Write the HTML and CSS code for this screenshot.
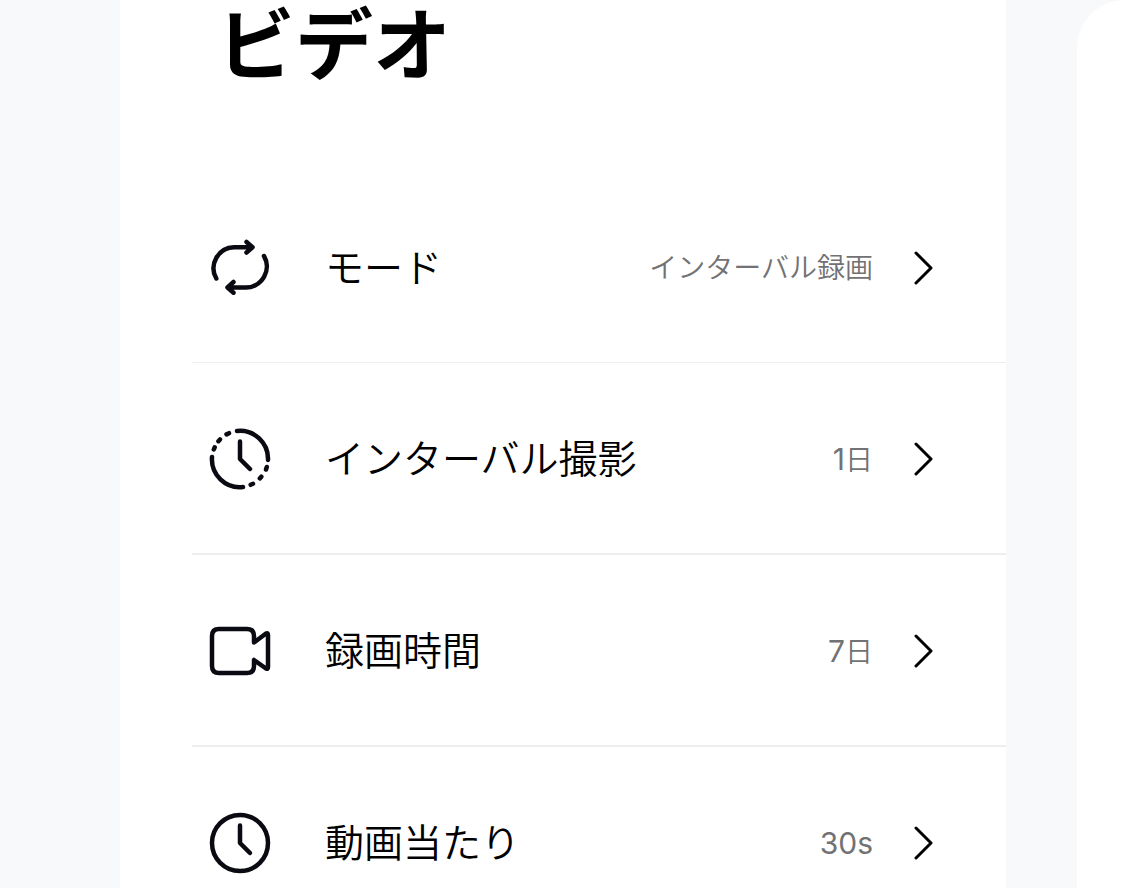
FILE: index.html
```html
<!DOCTYPE html>
<html lang="ja">
<head>
<meta charset="utf-8">
<meta name="viewport" content="width=device-width, initial-scale=1">
<title>ビデオ</title>
<link rel="stylesheet" href="styles.css">
</head>
<body>
<div class="layout">
  <main class="panel">
    <h1 class="title">ビデオ</h1>
    <ul class="settings">
      <li class="item">
        <button class="row" type="button">
          <svg class="icon" viewBox="0 0 64 64" aria-hidden="true"><path d="M8.300 42.500A21 21 0 0 1 26 11.200H44M38.500 6L44.500 11.200L38.500 16.500M56 20A21 21 0 0 1 38 51.500H20M25.500 46L19.500 51.500L25.500 56.700"/></svg>
          <span class="label">モード</span>
          <span class="value">インターバル録画</span>
          <svg class="chevron" viewBox="0 0 20 34" aria-hidden="true"><path d="M2 2L17 17L2 32"/></svg>
        </button>
      </li>
      <li class="item">
        <button class="row" type="button">
          <svg class="icon" viewBox="0 0 64 64" aria-hidden="true"><path d="M29 4A28 28 0 0 1 60 33M35 60A28 28 0 0 1 4 30M32 14.500V32L42 42M5.800 22.500L6.700 20.300M10.400 14.200L12 12.400M18.500 7.400L21 6.200M58.800 40L58 42.500M53.300 49.700L51.800 51.400M45 56.800L42.700 57.800"/></svg>
          <span class="label">インターバル撮影</span>
          <span class="value"><span class="number">1</span>日</span>
          <svg class="chevron" viewBox="0 0 20 34" aria-hidden="true"><path d="M2 2L17 17L2 32"/></svg>
        </button>
      </li>
      <li class="item">
        <button class="row" type="button">
          <svg class="icon" viewBox="0 0 64 64" aria-hidden="true"><path d="M11 10H39Q46 10 46 17V23.500L58 14.500Q60 13.500 60 16V48Q60 50.500 58 49.500L46 41V47Q46 54 39 54H11Q4 54 4 47V17Q4 10 11 10Z"/></svg>
          <span class="label">録画時間</span>
          <span class="value"><span class="number">7</span>日</span>
          <svg class="chevron" viewBox="0 0 20 34" aria-hidden="true"><path d="M2 2L17 17L2 32"/></svg>
        </button>
      </li>
      <li class="item">
        <button class="row" type="button">
          <svg class="icon" viewBox="0 0 64 64" aria-hidden="true"><circle cx="32" cy="32" r="28"/><path d="M32 14.500V32L42 42"/></svg>
          <span class="label">動画当たり</span>
          <span class="value"><span class="number">30s</span></span>
          <svg class="chevron" viewBox="0 0 20 34" aria-hidden="true"><path d="M2 2L17 17L2 32"/></svg>
        </button>
      </li>
    </ul>
  </main>
  <aside class="next-panel"></aside>
</div>
</body>
</html>
```
FILE: styles.css
```css
* {
  box-sizing: border-box;
}

body {
  margin: 0;
  background: #f7f9fb;
  color: #000;
  font-family: Inter, "Noto Sans CJK JP", sans-serif;
}

.layout {
  display: grid;
  grid-template-columns: minmax(0, 1fr) 48px;
  gap: 71px;
  height: 100vh;
  padding-left: 120px;
  overflow: hidden;
}

.panel {
  background: #fff;
}

.next-panel {
  background: #fff;
  border-top-left-radius: 48px;
}

.title {
  margin: 0;
  padding: 0 97px 80px;
  font-size: 78px;
  line-height: 92px;
  font-weight: 700;
}

.settings {
  margin: 0;
  padding: 0 0 0 72px;
  list-style: none;
}

.item {
  border-bottom: 2px solid #eeeeef;
}

.item:first-child {
  border-bottom-width: 1px;
}

.row {
  display: flex;
  align-items: center;
  width: 100%;
  height: 190px;
  padding: 2px 72px 0 16px;
  border: 0;
  background: none;
  color: inherit;
  font: inherit;
  text-align: left;
}

.icon {
  flex: none;
  width: 64px;
  height: 64px;
  margin-right: 53px;
  fill: none;
  stroke: #0a0a12;
  stroke-width: 4.5;
  stroke-linecap: round;
  stroke-linejoin: round;
}

.label {
  flex: 1;
  font-size: 39px;
  line-height: 48px;
  font-weight: 350;
}

.value {
  color: #727274;
  font-size: 28px;
  line-height: 40px;
  font-weight: 350;
}

.number {
  font-size: 30px;
  font-weight: 400;
}

.chevron {
  flex: none;
  width: 20px;
  height: 34px;
  margin-left: 41px;
  fill: none;
  stroke: #000;
  stroke-width: 3;
  stroke-linecap: round;
  stroke-linejoin: round;
}
```
